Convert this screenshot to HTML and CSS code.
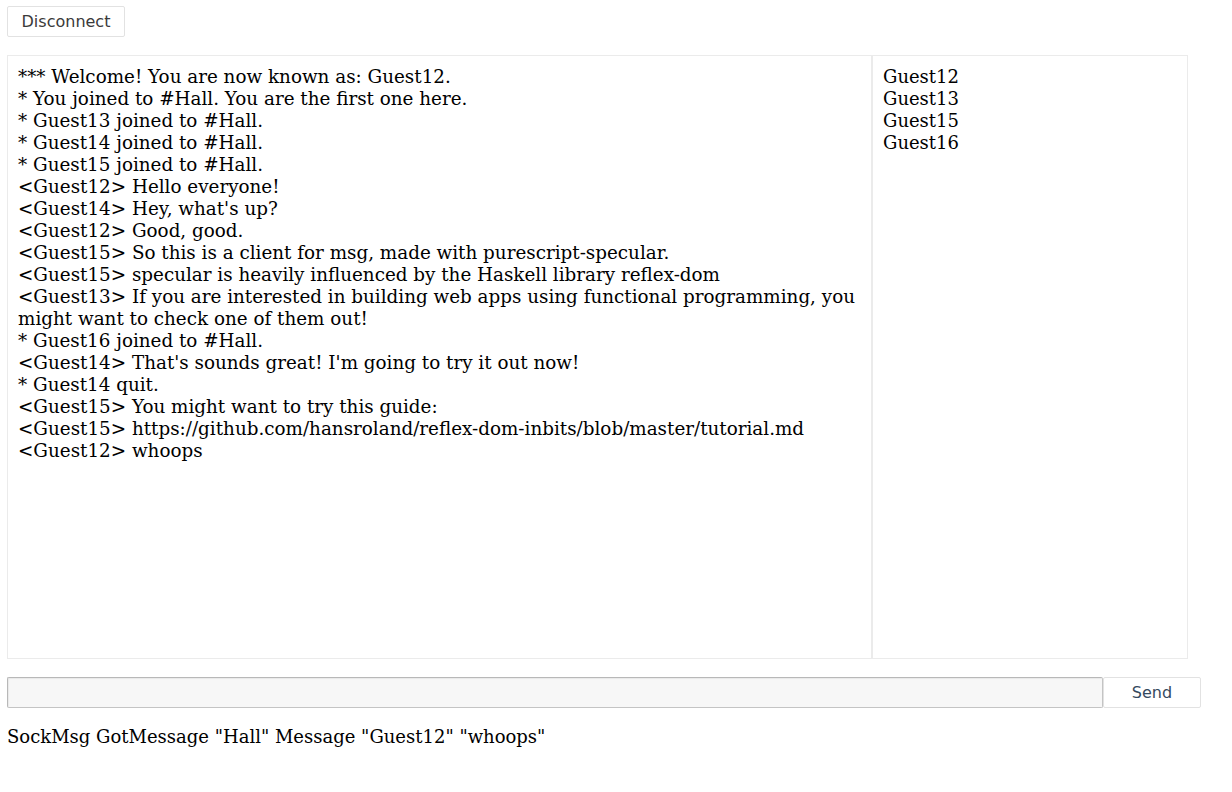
FILE: index.html
```html
<!DOCTYPE html>
<html>
<head>
<meta charset="utf-8">
<link rel="stylesheet" href="styles.css">
</head>
<body>
<div class="top"><button class="btn btn-disconnect">Disconnect</button></div>
<div class="chat">
  <div class="log">
    <div>*** Welcome! You are now known as: Guest12.</div>
    <div>* You joined to #Hall. You are the first one here.</div>
    <div>* Guest13 joined to #Hall.</div>
    <div>* Guest14 joined to #Hall.</div>
    <div>* Guest15 joined to #Hall.</div>
    <div>&lt;Guest12&gt; Hello everyone!</div>
    <div>&lt;Guest14&gt; Hey, what's up?</div>
    <div>&lt;Guest12&gt; Good, good.</div>
    <div>&lt;Guest15&gt; So this is a client for msg, made with purescript-specular.</div>
    <div>&lt;Guest15&gt; specular is heavily influenced by the Haskell library reflex-dom</div>
    <div>&lt;Guest13&gt; If you are interested in building web apps using functional programming, you might want to check one of them out!</div>
    <div>* Guest16 joined to #Hall.</div>
    <div>&lt;Guest14&gt; That's sounds great! I'm going to try it out now!</div>
    <div>* Guest14 quit.</div>
    <div>&lt;Guest15&gt; You might want to try this guide:</div>
    <div>&lt;Guest15&gt; https://github.com/hansroland/reflex-dom-inbits/blob/master/tutorial.md</div>
    <div>&lt;Guest12&gt; whoops</div>
  </div>
  <div class="users">
    <div>Guest12</div>
    <div>Guest13</div>
    <div>Guest15</div>
    <div>Guest16</div>
  </div>
</div>
<div class="send-row">
  <input class="msg-input" type="text">
  <button class="btn btn-send">Send</button>
</div>
<div class="status">SockMsg GotMessage "Hall" Message "Guest12" "whoops"</div>
</body>
</html>
```
FILE: styles.css
```css
html, body {
  margin: 0;
  padding: 0;
  background: #fff;
}
body {
  padding: 6px 31px 0 7px;
  font-family: "DejaVu Serif", serif;
  font-size: 18px;
  line-height: 22px;
  color: #000;
}
.top {
  display: flex;
  height: 31px;
}
.btn {
  font-family: "DejaVu Sans", sans-serif;
  font-size: 16px;
  color: #3a3a3a;
  background: #fff;
  border: 1px solid #e2e2e2;
  border-radius: 2px;
  height: 31px;
  padding: 0;
  margin: 0;
  box-sizing: border-box;
}
.btn-disconnect {
  width: 118px;
}
.chat {
  margin-top: 18px;
  display: flex;
  width: 1181px;
  height: 604px;
  border: 1px solid #ebebeb;
  box-sizing: border-box;
}
.log {
  width: 865px;
  box-sizing: border-box;
  padding: 10px 10px;
  border-right: 2px solid #ebebeb;
  font-size: 18.33px;
}
.users {
  flex: 1;
  padding: 10px 10px;
}
.send-row {
  margin-top: 18px;
  display: flex;
  height: 31px;
}
.msg-input {
  width: 1096px;
  height: 31px;
  box-sizing: border-box;
  margin: 0;
  border: 1px solid #c4c4c4;
  border-left-color: #b8b8b8;
  border-top-color: #b8b8b8;
  border-radius: 2px;
  background: #f7f7f7;
  box-shadow: inset 1px 1px 1px rgba(0,0,0,0.06);
}
.btn-send {
  width: 98px;
  color: #34495e;
}
.status {
  margin-top: 18px;
}
```
